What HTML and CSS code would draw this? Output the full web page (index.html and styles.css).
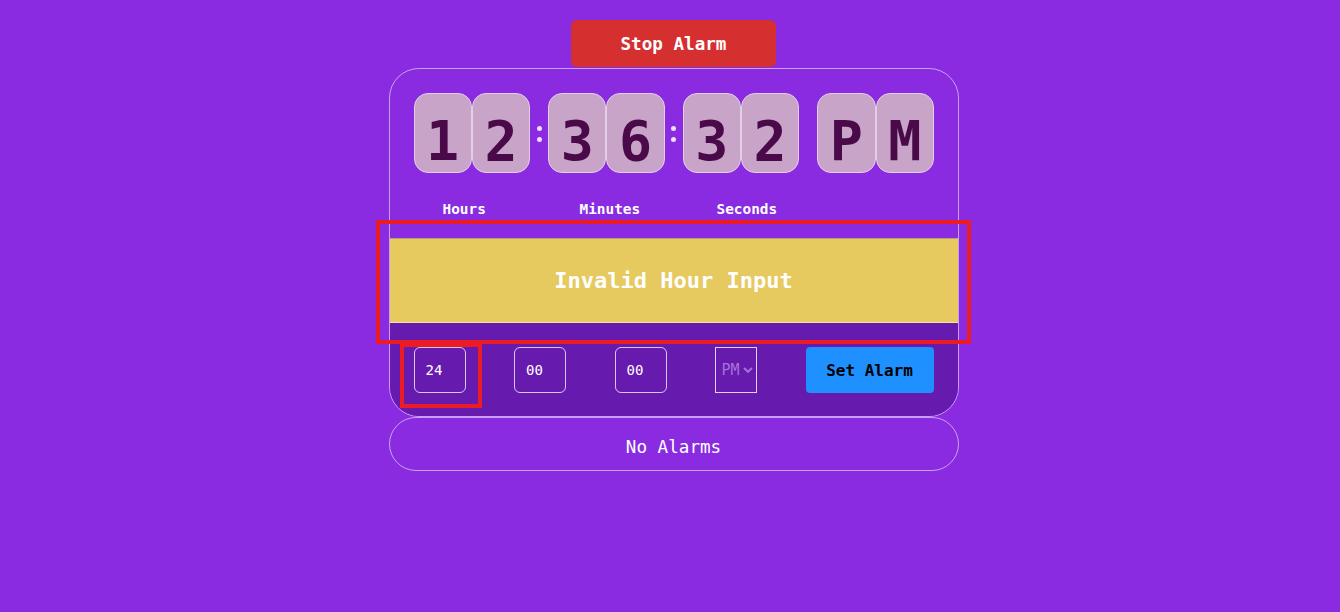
FILE: index.html
```html
<!DOCTYPE html>
<html lang="en">
<head>
<meta charset="utf-8">
<title>Alarm Clock</title>
<link rel="stylesheet" href="styles.css">
</head>
<body>
<div class="page">
  <button class="stop-btn">Stop Alarm</button>
  <div class="card">
    <div class="clock">
      <div class="group"><span class="digit">1</span><span class="digit">2</span></div>
      <span class="sep"><i class="dot"></i><i class="dot"></i></span>
      <div class="group"><span class="digit">3</span><span class="digit">6</span></div>
      <span class="sep"><i class="dot"></i><i class="dot"></i></span>
      <div class="group"><span class="digit">3</span><span class="digit">2</span></div>
      <span class="sep"></span>
      <div class="group"><span class="digit">P</span><span class="digit">M</span></div>
    </div>
    <div class="labels">
      <span>Hours</span>
      <span>Minutes</span>
      <span>Seconds</span>
    </div>
    <div class="message">Invalid Hour Input</div>
    <div class="form">
      <input class="field" type="text" value="24">
      <input class="field" type="text" value="00">
      <input class="field" type="text" value="00">
      <div class="ampm">PM<svg width="10" height="6" viewBox="0 0 10 6"><path d="M1 1 L5 4.8 L9 1" fill="none" stroke="currentColor" stroke-width="2"/></svg></div>
      <button class="set-btn">Set Alarm</button>
    </div>
    <div class="mark mark-msg"></div>
    <div class="mark mark-hour"></div>
  </div>
  <div class="alarms">No Alarms</div>
</div>
</body>
</html>
```

FILE: styles.css
```css
* { box-sizing: border-box; }
html, body { margin: 0; padding: 0; }
body {
  background: #8a2be2;
  font-family: "DejaVu Sans Mono", "Liberation Mono", monospace;
  color: #fff;
  height: 612px;
  overflow: hidden;
}
.page {
  display: flex;
  flex-direction: column;
  align-items: center;
  padding: 20px 0 0 7px;
}
.stop-btn {
  width: 205px;
  height: 47px;
  border: none;
  border-radius: 6px;
  background: #d62f2f;
  color: #fff;
  font-family: inherit;
  font-weight: bold;
  font-size: 17.6px;
}
.card {
  position: relative;
  margin-top: 1px;
  width: 570px;
  border: 1px solid rgba(255,255,255,0.55);
  border-radius: 30px;
}
.clock {
  display: flex;
  padding: 24px 0 0 24px;
}
.group { display: flex; }
.digit {
  width: 58.3px;
  height: 80px;
  padding-top: 15px;
  display: flex;
  justify-content: center;
  line-height: 64px;
  background: #c8a4c8;
  border: 1px solid #e4cfe8;
  border-radius: 14px;
  color: #4a0a4a;
  font-weight: bold;
  font-size: 55px;
}
.sep {
  width: 18px;
  display: flex;
  flex-direction: column;
  align-items: center;
  justify-content: center;
  gap: 6px;
  padding-top: 2px;
}
.dot {
  display: block;
  width: 5px;
  height: 5px;
  border-radius: 50%;
  background: #eedcff;
}
.labels {
  display: grid;
  grid-template-columns: 137px 137px 137px;
  padding-left: 53px;
  margin-top: 26px;
  line-height: 20px;
  font-size: 14.4px;
  font-weight: bold;
}
.message {
  margin-top: 19px;
  height: 85px;
  display: flex;
  align-items: center;
  justify-content: center;
  background: #e6c95f;
  border-top: 1px solid #b4a070;
  border-bottom: 1px solid #f4e2a0;
  color: #fff;
  font-weight: bold;
  font-size: 22px;
}
.form {
  display: flex;
  justify-content: space-between;
  align-items: center;
  padding: 24px 24px 23px 24px;
  background: #661aae;
  border-radius: 0 0 29px 29px;
}
.field {
  width: 52px;
  height: 46px;
  padding: 0 0 0 11px;
  background: transparent;
  border: 1px solid rgba(255,255,255,0.75);
  border-radius: 6px;
  color: #fff;
  font-family: inherit;
  font-size: 14px;
  outline: none;
}
.ampm {
  width: 42px;
  height: 46px;
  display: flex;
  align-items: center;
  justify-content: center;
  gap: 3px;
  padding-left: 2px;
  border: 1px solid rgba(255,255,255,0.8);
  color: #a373d8;
  font-size: 15px;
}
.set-btn {
  width: 128px;
  height: 46px;
  border: none;
  border-radius: 4px;
  background: #1e90ff;
  color: #000;
  font-family: inherit;
  font-weight: bold;
  font-size: 16px;
}
.alarms {
  width: 570px;
  height: 54px;
  padding-top: 6px;
  display: flex;
  align-items: center;
  justify-content: center;
  border: 1px solid rgba(255,255,255,0.55);
  border-radius: 27px;
  font-size: 17.6px;
}
.mark {
  position: absolute;
  border: 4px solid #ec1c24;
  pointer-events: none;
}
.mark-msg { left: -14px; top: 151px; width: 595px; height: 124px; }
.mark-hour { left: 10px; top: 274px; width: 82px; height: 65px; }
```
